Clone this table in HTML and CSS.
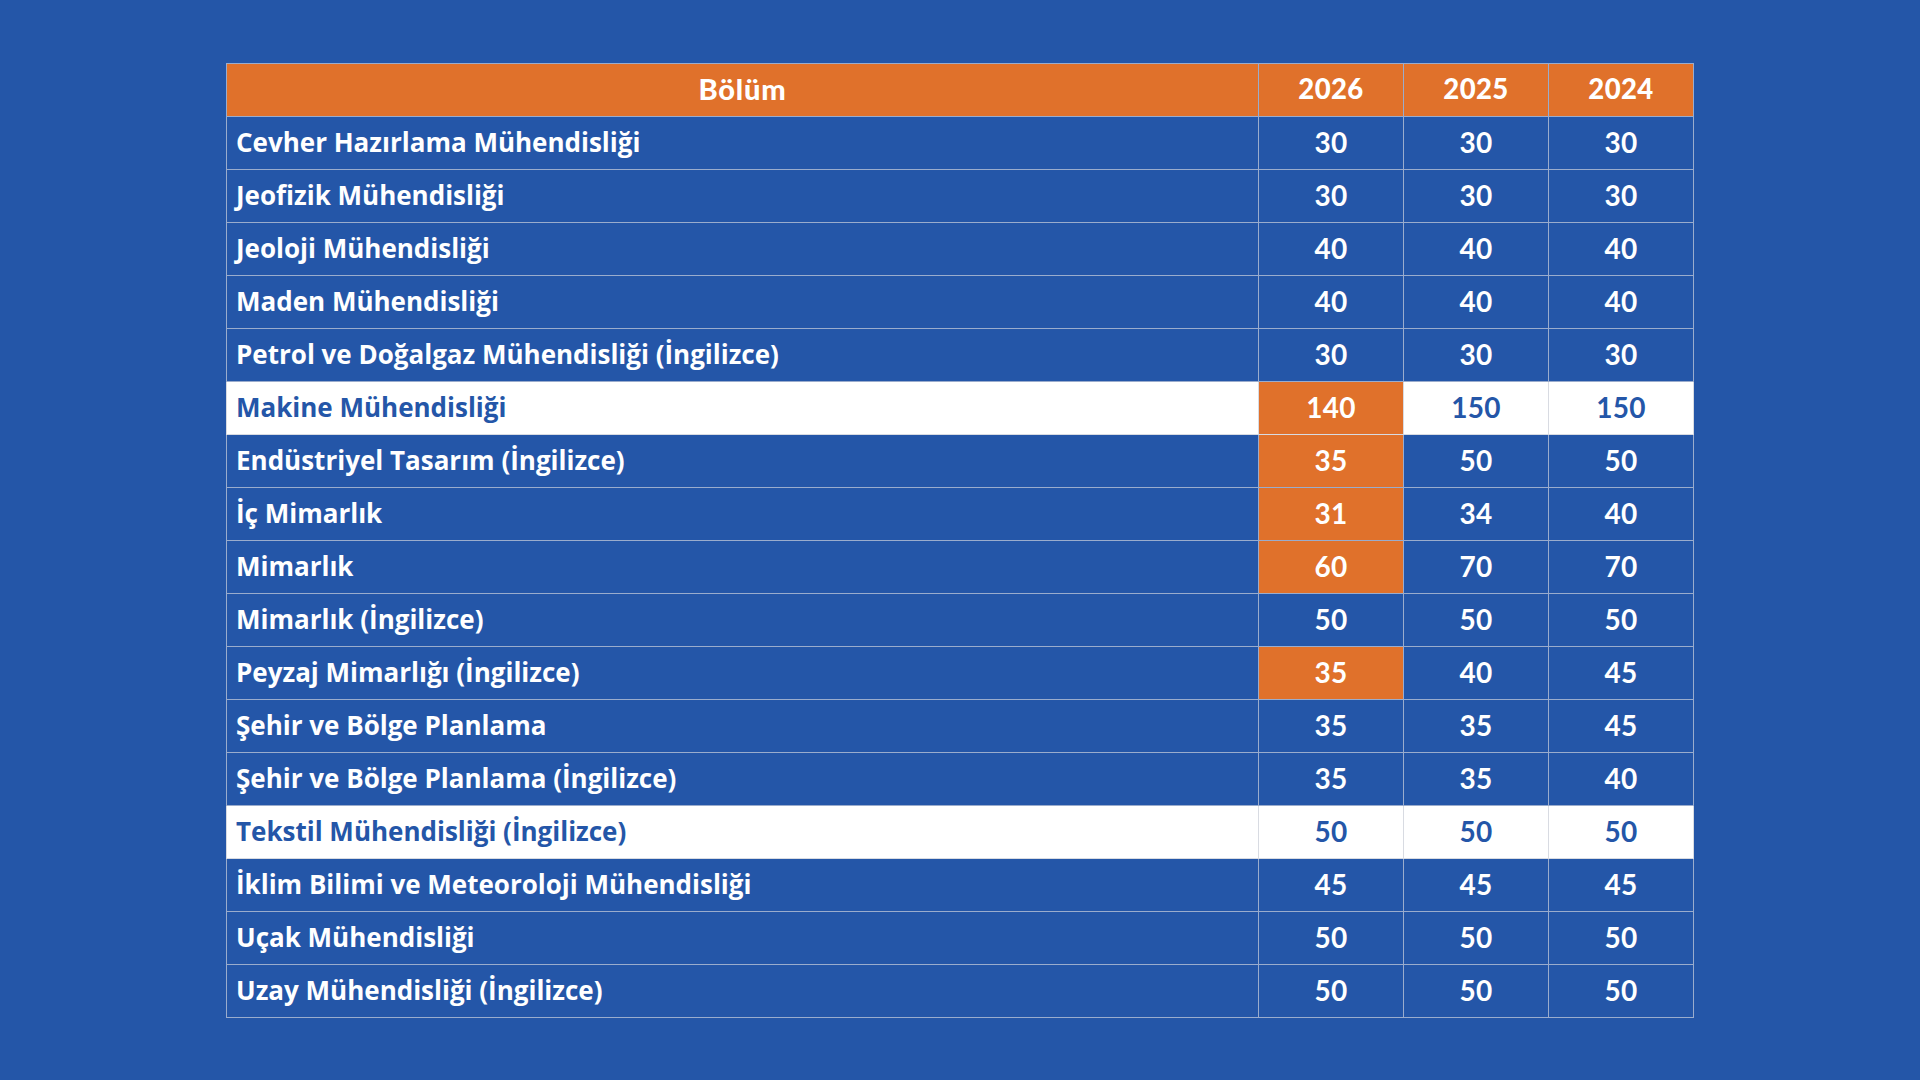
FILE: index.html
```html
<!DOCTYPE html>
<html lang="tr">
<head>
<meta charset="utf-8">
<title>Kontenjanlar</title>
<link rel="stylesheet" href="styles.css">
</head>
<body>
<main class="page">
<table class="quota">
<colgroup>
<col class="c-name"><col class="c-year"><col class="c-year"><col class="c-year">
</colgroup>
<thead>
<tr><th class="h-name">Bölüm</th><th>2026</th><th>2025</th><th>2024</th></tr>
</thead>
<tbody>
<tr><td>Cevher Hazırlama Mühendisliği</td><td>30</td><td>30</td><td>30</td></tr>
<tr><td>Jeofizik Mühendisliği</td><td>30</td><td>30</td><td>30</td></tr>
<tr><td>Jeoloji Mühendisliği</td><td>40</td><td>40</td><td>40</td></tr>
<tr><td>Maden Mühendisliği</td><td>40</td><td>40</td><td>40</td></tr>
<tr><td>Petrol ve Doğalgaz Mühendisliği (İngilizce)</td><td>30</td><td>30</td><td>30</td></tr>
<tr class="light"><td>Makine Mühendisliği</td><td class="hot">140</td><td>150</td><td>150</td></tr>
<tr><td>Endüstriyel Tasarım (İngilizce)</td><td class="hot">35</td><td>50</td><td>50</td></tr>
<tr><td>İç Mimarlık</td><td class="hot">31</td><td>34</td><td>40</td></tr>
<tr><td>Mimarlık</td><td class="hot">60</td><td>70</td><td>70</td></tr>
<tr><td>Mimarlık (İngilizce)</td><td>50</td><td>50</td><td>50</td></tr>
<tr><td>Peyzaj Mimarlığı (İngilizce)</td><td class="hot">35</td><td>40</td><td>45</td></tr>
<tr><td>Şehir ve Bölge Planlama</td><td>35</td><td>35</td><td>45</td></tr>
<tr><td>Şehir ve Bölge Planlama (İngilizce)</td><td>35</td><td>35</td><td>40</td></tr>
<tr class="light"><td>Tekstil Mühendisliği (İngilizce)</td><td>50</td><td>50</td><td>50</td></tr>
<tr><td>İklim Bilimi ve Meteoroloji Mühendisliği</td><td>45</td><td>45</td><td>45</td></tr>
<tr><td>Uçak Mühendisliği</td><td>50</td><td>50</td><td>50</td></tr>
<tr><td>Uzay Mühendisliği (İngilizce)</td><td>50</td><td>50</td><td>50</td></tr>
</tbody>
</table>
</main>
</body>
</html>
```
FILE: styles.css
```css
html, body {
  margin: 0;
  padding: 0;
}
body {
  background: #2456a8;
  font-family: "Open Sans", "Noto Sans", sans-serif;
  color: #ffffff;
}
.page {
  height: 1080px;
  display: flex;
  align-items: center;
  justify-content: center;
}
.quota {
  width: 1466px;
  table-layout: fixed;
  border-collapse: collapse;
  border: 1.5px solid #9aaccd;
}
.c-name { width: 1032px; }
.c-year { width: 145px; }
.quota th,
.quota td {
  height: 53px;
  padding: 0 0 2px 0;
  box-sizing: border-box;
  border: 1.5px solid #9aaccd;
  text-align: center;
  vertical-align: middle;
  font-family: "Lato", "Open Sans", sans-serif;
  font-weight: 700;
  font-size: 28px;
  line-height: 1;
  letter-spacing: 0.3px;
}
.quota thead th {
  background: #e0712b;
  font-weight: 900;
  font-size: 27.5px;
  letter-spacing: 0.4px;
}
.quota thead th.h-name {
  font-size: 29px;
  letter-spacing: 0.8px;
}
.quota td:first-child {
  text-align: left;
  padding-left: 9px;
  font-family: "Open Sans", "Noto Sans", sans-serif;
  font-weight: 700;
  font-size: 26px;
  letter-spacing: 0;
}
.quota tr.light td {
  background: #ffffff;
  color: #2456a8;
  border-color: #d8dbe2;
}
.quota td.hot,
.quota tr.light td.hot {
  background: #e0712b;
  color: #ffffff;
}
```
